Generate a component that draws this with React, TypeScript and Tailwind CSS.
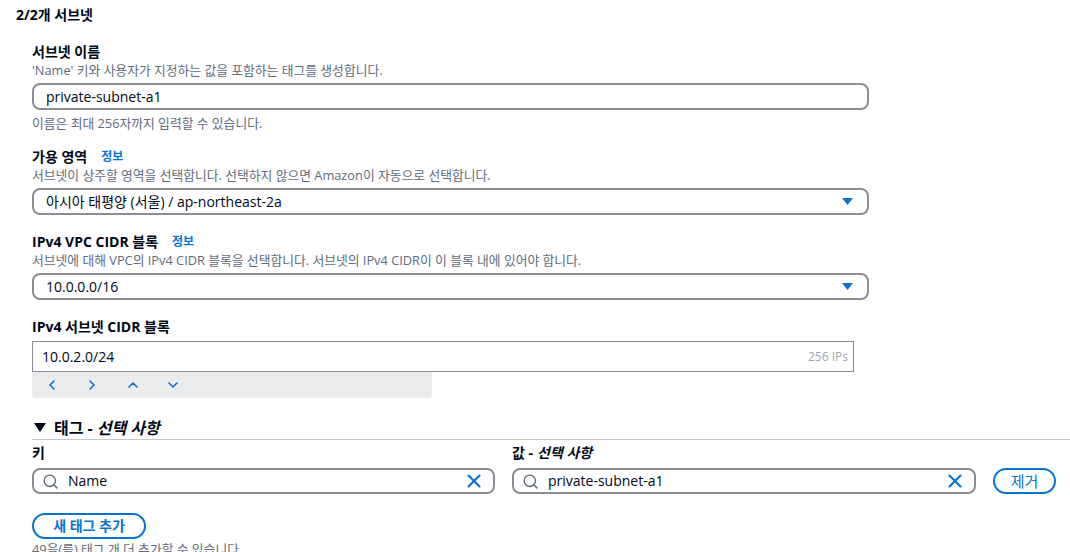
import { Search, X } from "lucide-react";

const font = { fontFamily: "'Open Sans', 'Noto Sans CJK KR', sans-serif" };

function Caret() {
  return (
    <svg width="11" height="7" viewBox="0 0 11 7" className="shrink-0">
      <path d="M0 0 H11 L5.5 7 Z" fill="#0972d3" />
    </svg>
  );
}

function Chevron({ dir }: { dir: "left" | "right" | "up" | "down" }) {
  const d = {
    left: "M6 1 L2 5 L6 9",
    right: "M2 1 L6 5 L2 9",
    up: "M1 7 L5 3 L9 7",
    down: "M1 3 L5 7 L9 3",
  }[dir];
  return (
    <svg width="10" height="10" viewBox="0 0 10 10">
      <path d={d} fill="none" stroke="#0972d3" strokeWidth="1.6" strokeLinecap="round" strokeLinejoin="round" />
    </svg>
  );
}

function Label({ text, info }: { text: string; info?: boolean }) {
  return (
    <div className="flex items-center h-5 text-sm font-bold text-[#000716]">
      {text}
      {info && <span className="ml-[14px] text-xs font-bold text-[#0972d3]">정보</span>}
    </div>
  );
}

function Desc({ text }: { text: string }) {
  return <div className="text-[12.8px] leading-4 text-[#5f6b7a]">{text}</div>;
}

function Select({ value }: { value: string }) {
  return (
    <div className="mt-[5px] flex items-center justify-between h-[27px] w-[837px] border-2 border-[#8c8c94] rounded-lg pl-3 pr-[14px] text-sm text-[#000716]">
      <span>{value}</span>
      <Caret />
    </div>
  );
}

function SearchInput({ value, width }: { value: string; width: string }) {
  return (
    <div className={`flex items-center h-[26px] border-2 border-[#8c8c94] rounded-lg pl-[8px] pr-2 text-sm text-[#000716] ${width}`}>
      <Search size={17} strokeWidth={2} className="text-[#5f6b7a] shrink-0" />
      <span className="ml-[9px] flex-1">{value}</span>
      <X size={22} strokeWidth={2.3} className="text-[#0972d3] shrink-0" />
    </div>
  );
}

export default function App() {
  return (
    <div className="w-[1070px] h-[552px] overflow-hidden bg-white" style={font}>
      <div className="pt-[5px] pl-4 h-[25px] flex items-center text-sm font-bold text-[#000716]">2/2개 서브넷</div>

      <div className="pl-8 pt-[17px]">
        {/* 서브넷 이름 */}
        <Label text="서브넷 이름" />
        <Desc text="'Name' 키와 사용자가 지정하는 값을 포함하는 태그를 생성합니다." />
        <div className="mt-[5px] flex items-center h-[27px] w-[837px] border-2 border-[#8c8c94] rounded-lg pl-3 text-sm text-[#000716]">
          private-subnet-a1
        </div>
        <div className="mt-[5px] text-[12.8px] leading-4 text-[#5f6b7a]">이름은 최대 256자까지 입력할 수 있습니다.</div>

        {/* 가용 영역 */}
        <div className="mt-4">
          <Label text="가용 영역" info />
          <Desc text="서브넷이 상주할 영역을 선택합니다. 선택하지 않으면 Amazon이 자동으로 선택합니다." />
          <Select value="아시아 태평양 (서울) / ap-northeast-2a" />
        </div>

        {/* VPC CIDR */}
        <div className="mt-[17px]">
          <Label text="IPv4 VPC CIDR 블록" info />
          <Desc text="서브넷에 대해 VPC의 IPv4 CIDR 블록을 선택합니다. 서브넷의 IPv4 CIDR이 이 블록 내에 있어야 합니다." />
          <Select value="10.0.0.0/16" />
        </div>

        {/* 서브넷 CIDR */}
        <div className="mt-[17px]">
          <Label text="IPv4 서브넷 CIDR 블록" />
          <div className="mt-1 flex items-center justify-between h-[31px] w-[822px] border border-[#8c8c94] pl-[9px] pr-[5px] text-sm text-[#000716]">
            <span>10.0.2.0/24</span>
            <span className="text-xs text-[#9ba7b6]">256 IPs</span>
          </div>
          <div className="flex items-center h-[26px] w-[400px] bg-[#e9ebed] rounded-b pl-4 gap-[30px]">
            <Chevron dir="left" />
            <Chevron dir="right" />
            <Chevron dir="up" />
            <Chevron dir="down" />
          </div>
        </div>

        {/* 태그 */}
        <div className="mt-5 flex items-center h-[22px] pb-[2px] border-b border-[#c6c6cd] text-base font-bold text-[#000716]">
          <svg width="12" height="9" viewBox="0 0 12 9" className="ml-[2px] mr-2">
            <path d="M0 0 H12 L6 9 Z" fill="#000716" />
          </svg>
          <span>태그 - </span>
          <span className="ml-1 italic">선택 사항</span>
        </div>

        <div className="mt-[3px] flex gap-[17px]">
          <div className="flex flex-col">
            <div className="h-5 flex items-center text-sm font-bold text-[#000716]">키</div>
            <div className="mt-[5px]">
              <SearchInput value="Name" width="w-[463px]" />
            </div>
          </div>
          <div className="flex flex-col">
            <div className="h-5 flex items-center text-sm font-bold text-[#000716]">
              값 - <span className="ml-1 italic">선택 사항</span>
            </div>
            <div className="mt-[5px]">
              <SearchInput value="private-subnet-a1" width="w-[464px]" />
            </div>
          </div>
          <div className="flex flex-col justify-end">
            <div className="flex items-center justify-center h-[26px] w-[63px] rounded-full border-2 border-[#0972d3] text-[15px] text-[#0972d3]">
              제거
            </div>
          </div>
        </div>

        <div className="mt-[19px] flex items-center justify-center h-[26px] w-[114px] rounded-full border-2 border-[#0972d3] text-sm font-bold text-[#0972d3]">
          새 태그 추가
        </div>
        <div className="mt-[2px] text-[12.8px] leading-4 text-[#5f6b7a]">49을(를) 태그 개 더 추가할 수 있습니다.</div>
      </div>
    </div>
  );
}
